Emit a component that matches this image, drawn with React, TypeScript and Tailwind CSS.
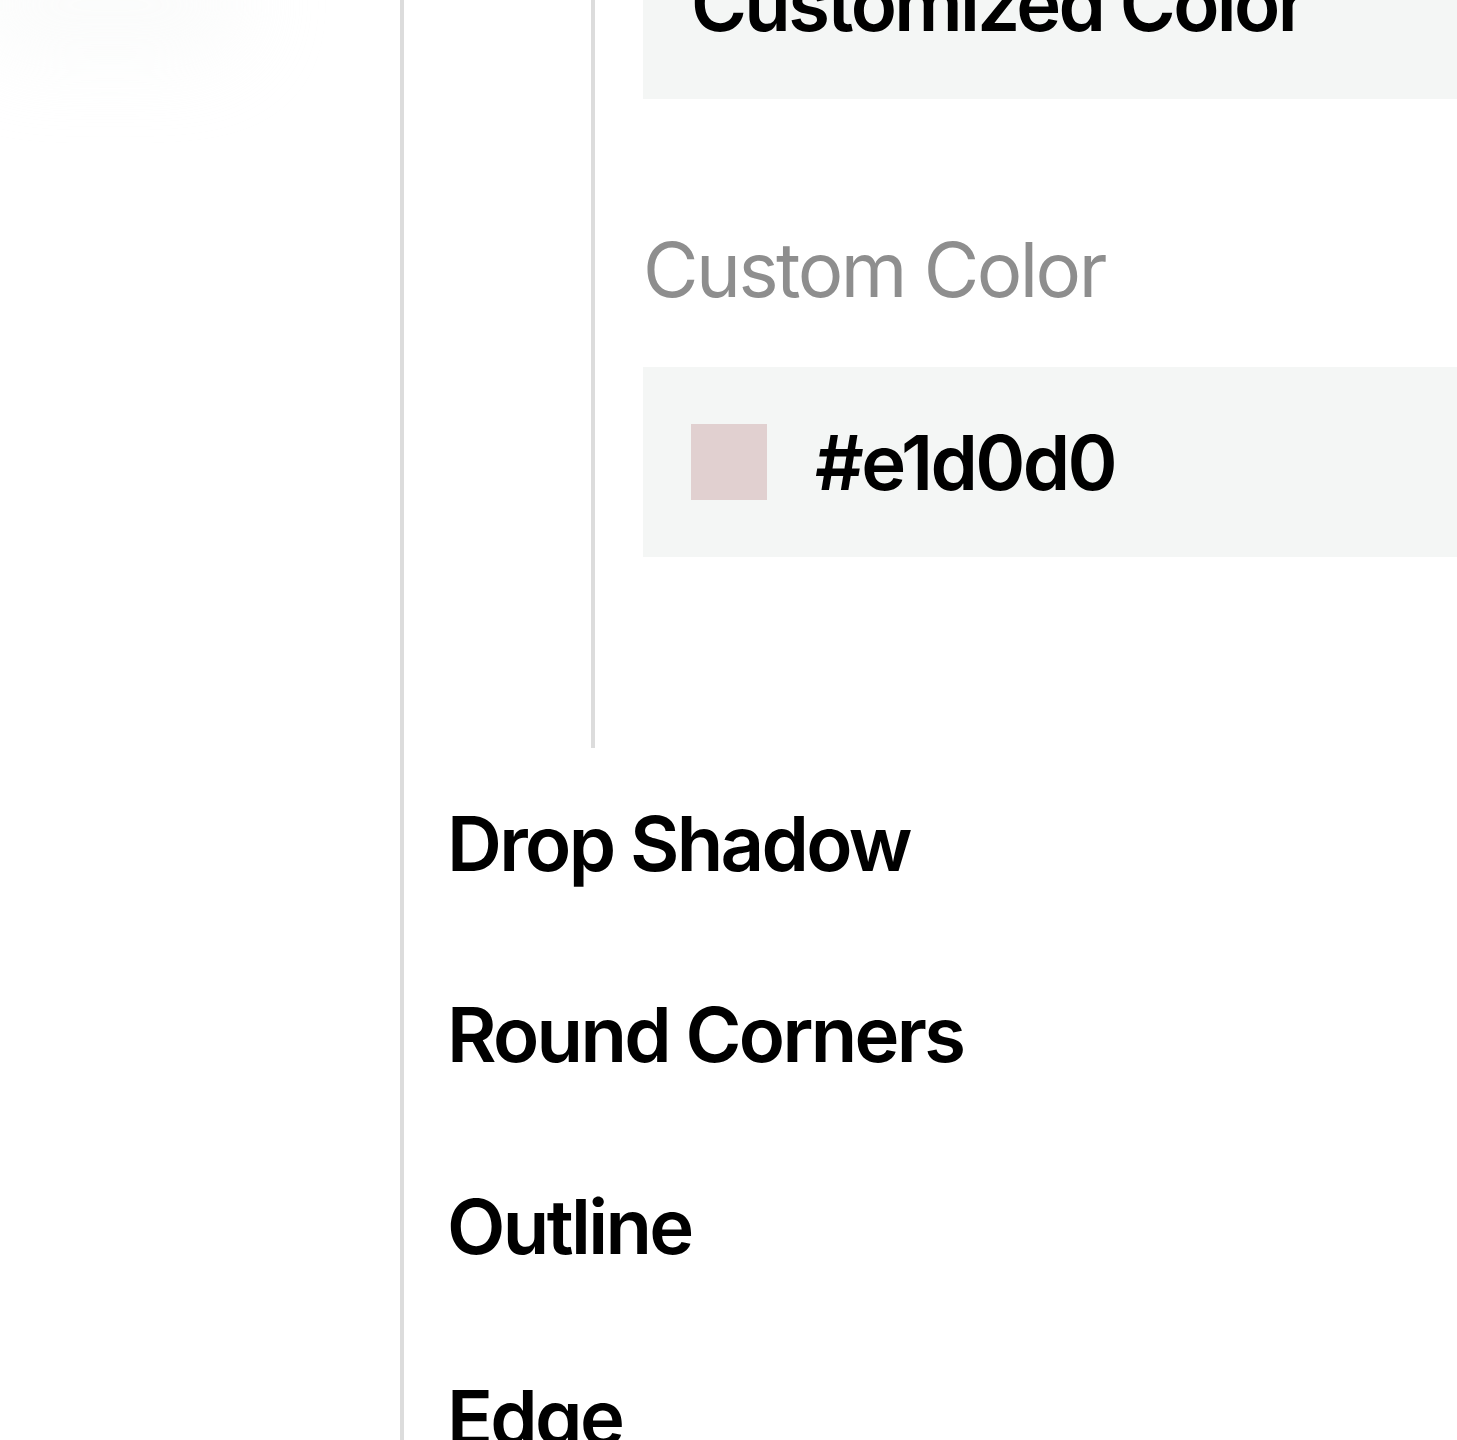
export default function App() {
  const rows = ['Drop Shadow', 'Round Corners', 'Outline', 'Edge']

  return (
    <div className="relative h-[1440px] overflow-hidden bg-white font-['Inter',sans-serif] text-black">
      {/* faint shadow left over from a card above */}
      <div className="pointer-events-none absolute -left-[30px] -top-[50px] h-[110px] w-[280px] rounded-full bg-[#f4f6f5] opacity-40 blur-2xl" />

      <div className="relative ml-[400px] -mt-[91px] border-l-4 border-[#dcdcdc]">
        <div className="ml-[187px] border-l-4 border-[#dcdcdc] pb-[191px] pl-12">
          <div className="flex h-[190px] items-center bg-[#f4f6f5] px-12">
            <span className="text-[76px] font-semibold leading-[1.2] tracking-[-0.035em]">Customized Color</span>
          </div>

          <p className="mt-[125px] text-[76px] leading-[1.2] tracking-[-0.033em] text-[#8e8e8e]">Custom Color</p>

          <div className="mt-[52px] flex h-[190px] items-center gap-12 bg-[#f4f6f5] px-12">
            <div className="h-[76px] w-[76px] bg-[#e1d0d0]" />
            <span className="text-[76px] font-semibold leading-[1.2] tracking-[-0.035em]">#e1d0d0</span>
          </div>
        </div>

        {rows.map(r => (
          <div key={r} className="py-[50px] pl-[43px]">
            <p className="text-[76px] font-semibold leading-[1.2] tracking-[-0.035em]">{r}</p>
          </div>
        ))}
      </div>
    </div>
  )
}
